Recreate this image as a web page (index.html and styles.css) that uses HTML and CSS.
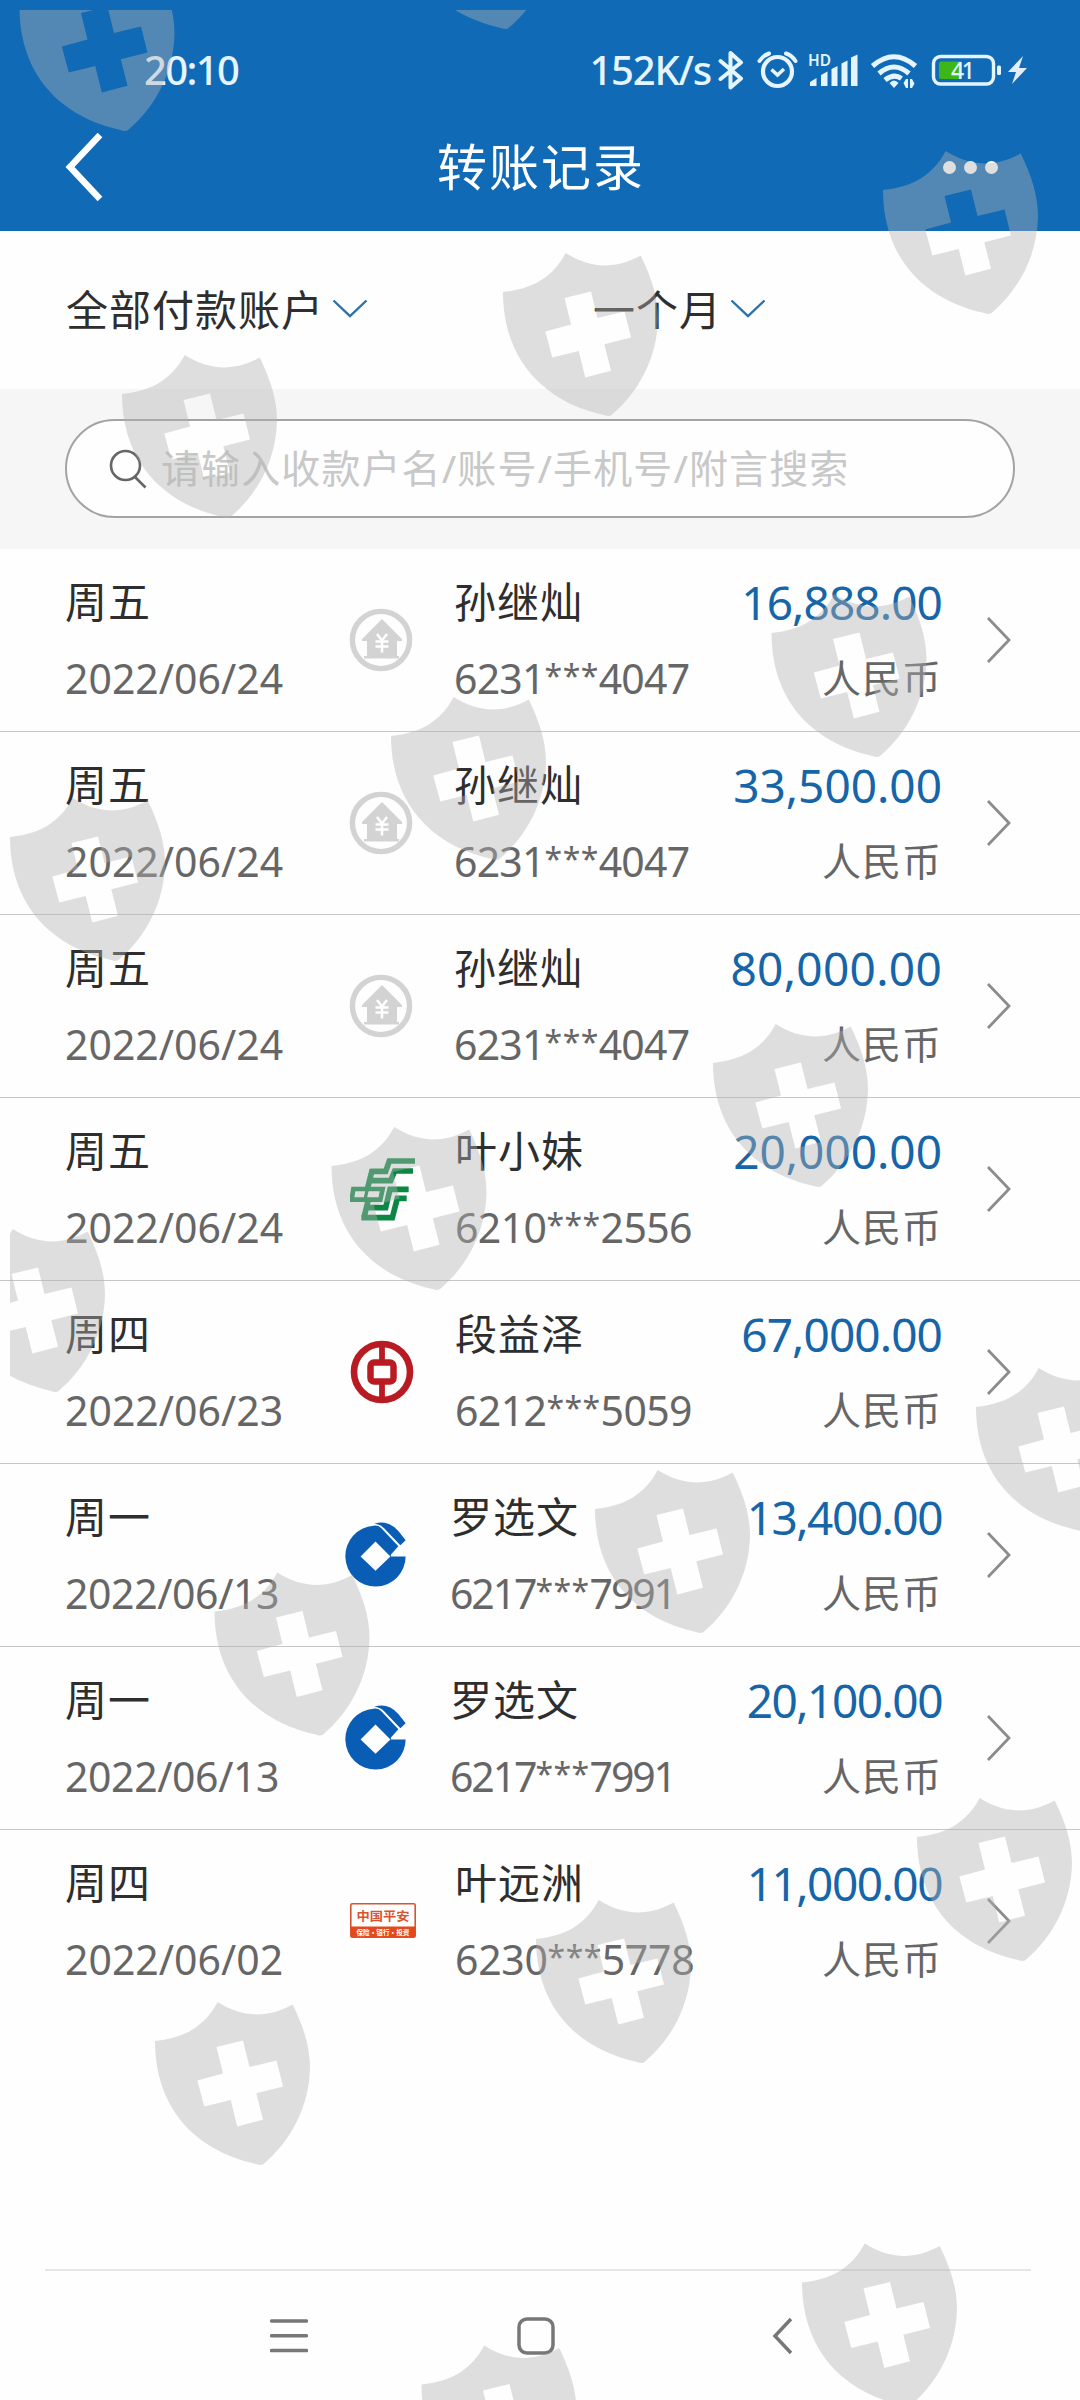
FILE: index.html
```html
<!DOCTYPE html>
<html lang="zh-CN">
<head>
    <meta charset="UTF-8">
    <meta name="viewport" content="width=device-width, initial-scale=1.0">
    <title>转账记录</title>
    <link rel="stylesheet" href="styles.css">
</head>
<body>

<!-- Shared icons -->
<svg class="defs" width="0" height="0">
    <symbol id="arrow-right" viewBox="0 0 26 48">
        <path d="M2 2L23 24L2 46" fill="none" stroke="#8c8c8c" stroke-width="2.8"/>
    </symbol>
    <symbol id="arrow-down" viewBox="0 0 36 20">
        <path d="M1.5 1.5L18 17L34.5 1.5" fill="none" stroke="#2b72a8" stroke-width="2.4"/>
    </symbol>
    <symbol id="bank-default" viewBox="0 0 64 64">
        <circle cx="32" cy="32" r="28.6" fill="none" stroke="#d3d3d3" stroke-width="5.4"/>
        <path d="M33 11L53 31V33H48V48H50V50.500H15V48H18V33H13V31Z" fill="#d3d3d3"/>
        <path d="M28 26L33 32.500L38 26M26.500 33.500H39.500M26.500 38.500H39.500M33 32V44.500" fill="none" stroke="#fff" stroke-width="2.500"/>
    </symbol>
    <symbol id="bank-ccb" viewBox="136 124 184 196">
        <path fill="#0a5db4" fill-rule="evenodd" d="M319 228A91 92 0 1 1 222 135Q236 133 245 142L297 197L274 223L275 228ZM228 183L183 228L228 271L273 228Z"/>
        <path fill="#0a5db4" d="M225 129Q265 116 297 151L319 179L303 194L254 143Q243 131 225 129Z"/>
    </symbol>
    <symbol id="shield" viewBox="0 -40 156 166" overflow="visible">
        <path fill-rule="evenodd" d="M0 0C30 -3 50 -15 62.700 -39C86 -24 112 -22 137.700 -36.400C149 -13 155 6 155 27C154 65 137 99 108 123.500Q105 124.500 101 123C38 109 0 65 0 0ZM88 -.5L61.500 6L68 32.500L42.300 39.500L49.300 65.500L75.700 59L82.300 85.400L108 78.700L101.300 52.300L128 45.500L121.500 19.500L94.500 26Z"/>
    </symbol>
</svg>

<div class="screen">
    <header class="header">
        <div class="status">
            <span class="time">20:10</span>
            <span class="speed">152K/s</span>
            <svg class="status-icons" width="310" height="42" viewBox="718 49 310 42" fill="none" stroke="#e4f5ff">
                <!-- bluetooth -->
                <path d="M720.500 61L741 78.500L730.500 87.500V53L741 62.500L720.500 79" stroke-width="4" stroke-linejoin="round" stroke-linecap="round"/>
                <!-- alarm -->
                <circle cx="777.500" cy="71.500" r="14.500" stroke-width="4.200"/>
                <path d="M759.500 61Q763 55.500 769 53.500M795.500 61Q792 55.500 786 53.500" stroke-width="4" stroke-linecap="round"/>
                <path d="M771.500 69.500L777.500 75L784 69" stroke-width="3.500"/>
                <!-- signal -->
                <path d="M810 86V82L816.500 78V86ZM821 86V75L827.500 71.500V86ZM831.500 86V69L837.500 66V86ZM841.500 86V63.500L847.500 60.500V86ZM851 86V57.500L857.500 54.500V86Z" fill="#e4f5ff" stroke="none"/>
                <!-- wifi -->
                <path d="M872.500 66Q894 47.500 915.500 66M879 73.500Q894 60.500 909 73.500M885 80Q894 73 901.500 78.500" stroke-width="5"/>
                <path d="M889.500 83Q894 78 898.500 83L894 88ZM903.500 83L906 79H908V88H906ZM910 88V79H912L914.500 83.500L912 88Z" fill="#e4f5ff" stroke="none"/>
                <!-- battery -->
                <rect x="933.500" y="56.500" width="60" height="27.500" rx="7" stroke-width="3.400"/>
                <rect x="939" y="61.500" width="23" height="17.500" rx="2" fill="#3fb618" stroke="none"/>
                <rect x="997" y="65.500" width="4" height="9.500" rx="1.500" fill="#e4f5ff" stroke="none"/>
                <path d="M1023 56L1008 72H1016L1012 84L1027 68H1019Z" fill="#e4eef8" stroke="none"/>
                <text class="hd" x="808" y="65.500" textLength="23" lengthAdjust="spacingAndGlyphs">HD</text>
                <text class="level" x="951" y="79" textLength="24">41</text>
            </svg>
        </div>
        <div class="title-bar">
            <svg class="back" width="38" height="70" viewBox="0 0 38 70">
                <path d="M35 3L5 35L35 67" fill="none" stroke="#fff" stroke-width="6.500"/>
            </svg>
            <h1>转账记录</h1>
            <div class="more"><i></i><i></i><i></i></div>
        </div>
    </header>

    <div class="filters">
        <div class="filter"><span>全部付款账户</span><svg width="36" height="20"><use href="#arrow-down"/></svg></div>
        <div class="filter"><span>一个月</span><svg width="36" height="20"><use href="#arrow-down"/></svg></div>
    </div>

    <div class="search">
        <div class="search-box">
            <svg width="38" height="40" viewBox="0 0 38 40" fill="none" stroke="#666" stroke-width="2.600">
                <circle cx="16.500" cy="16.500" r="14.500"/>
                <path d="M26 28L36.500 38.500"/>
            </svg>
            <span>请输入收款户名/账号/手机号/附言搜索</span>
        </div>
    </div>

    <ul class="records">
        <li class="record">
            <div class="date"><p>周五</p><p class="sub">2022/06/24</p></div>
            <div class="bank"><svg width="64" height="64"><use href="#bank-default"/></svg></div>
            <div class="payee"><p>孙继灿</p><p class="sub">6231<span class="mask">***</span>4047</p></div>
            <div class="amount"><p class="money narrow">16,888.00</p><p class="sub cny">人民币</p></div>
            <svg class="go" width="26" height="48"><use href="#arrow-right"/></svg>
        </li>
        <li class="record">
            <div class="date"><p>周五</p><p class="sub">2022/06/24</p></div>
            <div class="bank"><svg width="64" height="64"><use href="#bank-default"/></svg></div>
            <div class="payee"><p>孙继灿</p><p class="sub">6231<span class="mask">***</span>4047</p></div>
            <div class="amount"><p class="money">33,500.00</p><p class="sub cny">人民币</p></div>
            <svg class="go" width="26" height="48"><use href="#arrow-right"/></svg>
        </li>
        <li class="record">
            <div class="date"><p>周五</p><p class="sub">2022/06/24</p></div>
            <div class="bank"><svg width="64" height="64"><use href="#bank-default"/></svg></div>
            <div class="payee"><p>孙继灿</p><p class="sub">6231<span class="mask">***</span>4047</p></div>
            <div class="amount"><p class="money wide">80,000.00</p><p class="sub cny">人民币</p></div>
            <svg class="go" width="26" height="48"><use href="#arrow-right"/></svg>
        </li>
        <li class="record psbc">
            <div class="date"><p>周五</p><p class="sub">2022/06/24</p></div>
            <div class="bank">
                <svg width="66" height="64" viewBox="148 168 198 192" fill="none" stroke="#0c8743" stroke-width="17">
                    <path d="M343 180H266L255 211H210M337 210H282L270 239H203M215 205L200 264"/>
                    <path d="M158 264H246L239 296H153Z" stroke-width="14"/>
                    <path d="M200 264L193 296" stroke-width="10"/>
                    <path d="M324 265H268L255 320H196M318 292H290L275 350H182M203 296L190 350"/>
                </svg>
            </div>
            <div class="payee"><p>叶小妹</p><p class="sub">6210<span class="mask">***</span>2556</p></div>
            <div class="amount"><p class="money">20,000.00</p><p class="sub cny">人民币</p></div>
            <svg class="go" width="26" height="48"><use href="#arrow-right"/></svg>
        </li>
        <li class="record boc">
            <div class="date"><p>周四</p><p class="sub">2022/06/23</p></div>
            <div class="bank">
                <svg width="64" height="64" viewBox="0 0 64 64" fill="none" stroke="#b81c22">
                    <circle cx="32" cy="32" r="28" stroke-width="6.600"/>
                    <rect x="20.500" y="22.500" width="23" height="19" rx="3.500" stroke-width="6.500"/>
                    <path d="M32 3V20M32 44V61" stroke-width="5.800"/>
                </svg>
            </div>
            <div class="payee"><p>段益泽</p><p class="sub">6212<span class="mask">***</span>5059</p></div>
            <div class="amount"><p class="money narrow">67,000.00</p><p class="sub cny">人民币</p></div>
            <svg class="go" width="26" height="48"><use href="#arrow-right"/></svg>
        </li>
        <li class="record ccb">
            <div class="date"><p>周一</p><p class="sub">2022/06/13</p></div>
            <div class="bank"><svg width="61" height="65"><use href="#bank-ccb"/></svg></div>
            <div class="payee"><p>罗选文</p><p class="sub">6217<span class="mask">***</span>7991</p></div>
            <div class="amount"><p class="money narrower">13,400.00</p><p class="sub cny">人民币</p></div>
            <svg class="go" width="26" height="48"><use href="#arrow-right"/></svg>
        </li>
        <li class="record ccb">
            <div class="date"><p>周一</p><p class="sub">2022/06/13</p></div>
            <div class="bank"><svg width="61" height="65"><use href="#bank-ccb"/></svg></div>
            <div class="payee"><p>罗选文</p><p class="sub">6217<span class="mask">***</span>7991</p></div>
            <div class="amount"><p class="money narrower">20,100.00</p><p class="sub cny">人民币</p></div>
            <svg class="go" width="26" height="48"><use href="#arrow-right"/></svg>
        </li>
        <li class="record pingan">
            <div class="date"><p>周四</p><p class="sub">2022/06/02</p></div>
            <div class="bank">
                <svg width="66" height="35" viewBox="0 0 66 35">
                    <rect x=".8" y=".8" width="64.400" height="33.400" rx="1.500" fill="#fff" stroke="#d9532f" stroke-width="1.600"/>
                    <path d="M1 23.500H65V34H1Z" fill="#e4481b"/>
                    <text class="pa-name" x="33" y="18" textLength="53" lengthAdjust="spacingAndGlyphs">中国平安</text>
                    <text class="pa-sub" x="33" y="31.800" textLength="53" lengthAdjust="spacingAndGlyphs">保险·银行·投资</text>
                </svg>
            </div>
            <div class="payee"><p>叶远洲</p><p class="sub">6230<span class="mask">***</span>5778</p></div>
            <div class="amount"><p class="money narrower">11,000.00</p><p class="sub cny">人民币</p></div>
            <svg class="go" width="26" height="48"><use href="#arrow-right"/></svg>
        </li>
    </ul>

    <nav class="nav">
        <svg width="38" height="38" viewBox="0 0 38 38"><path d="M1.500 4H36.500M1.500 18.800H36.500M1.500 33.600H36.500" stroke-linecap="round"/></svg>
        <svg width="38" height="38" viewBox="0 0 38 38"><rect x="2" y="2" width="34" height="34" rx="8"/></svg>
        <svg class="nav-back" width="22" height="38" viewBox="0 0 22 38"><path d="M19 2L3 19L19 36"/></svg>
    </nav>

    <!-- Watermark -->
    <svg class="watermark" width="1080" height="2400" viewBox="0 0 1080 2400">
        <clipPath id="area"><rect x="10" y="10" width="1070" height="2390"/></clipPath>
        <g clip-path="url(#area)">
            <use href="#shield" x="19.500" y="-33" width="156" height="166"/>
            <use href="#shield" x="400" y="-135" width="156" height="166"/>
            <use href="#shield" x="883" y="150" width="156" height="166"/>
            <use href="#shield" x="503" y="252" width="156" height="166"/>
            <use href="#shield" x="122" y="354" width="156" height="166"/>
            <use href="#shield" x="771.500" y="593" width="156" height="166"/>
            <use href="#shield" x="391" y="696" width="156" height="166"/>
            <use href="#shield" x="10" y="797" width="156" height="166"/>
            <use href="#shield" x="713" y="1023" width="156" height="166"/>
            <use href="#shield" x="331.500" y="1126" width="156" height="166"/>
            <use href="#shield" x="-50" y="1228" width="156" height="166"/>
            <use href="#shield" x="976" y="1367" width="156" height="166"/>
            <use href="#shield" x="595" y="1469" width="156" height="166"/>
            <use href="#shield" x="214.500" y="1571.500" width="156" height="166"/>
            <use href="#shield" x="917" y="1797" width="156" height="166"/>
            <use href="#shield" x="536" y="1899" width="156" height="166"/>
            <use href="#shield" x="155" y="2001" width="156" height="166"/>
            <use href="#shield" x="802" y="2242.500" width="156" height="166"/>
            <use href="#shield" x="421.500" y="2344.500" width="156" height="166"/>
        </g>
    </svg>
</div>

</body>
</html>
```
FILE: styles.css
```css
* {
    margin: 0;
    padding: 0;
    box-sizing: border-box;
}
body {
    font-family: "Noto Sans", "Noto Sans CJK SC", sans-serif;
    background-color: #fefefe;
    color: #2e2e2e;
}
svg {
    display: block;
    flex-shrink: 0;
}
.defs {
    position: absolute;
}
.screen {
    position: relative;
    width: 1080px;
    height: 2400px;
    overflow: hidden;
    display: flex;
    flex-direction: column;
}
.header {
    height: 231px;
    padding-top: 22px;
    background-color: #116ab6;
    color: #fff;
}
.status {
    height: 96px;
    padding: 0 52px 0 144px;
    display: flex;
    align-items: center;
    color: #e4f5ff;
    font-size: 40px;
    font-weight: 500;
}
.time, .speed {
    padding-bottom: 2px;
    letter-spacing: -1.6px;
}
.speed {
    margin-left: auto;
    margin-right: 7px;
    letter-spacing: -1.2px;
}
.status text {
    fill: #e4f5ff;
    stroke: none;
    font-weight: 500;
}
.status .hd {
    font-size: 16px;
    font-weight: 600;
}
.status .level {
    font-size: 23px;
}
.title-bar {
    height: 98px;
    padding: 0 82px 0 65px;
    display: flex;
    align-items: center;
    justify-content: space-between;
}
.title-bar h1 {
    font-size: 50px;
    font-weight: 400;
    letter-spacing: 2px;
    padding: 0 0 6px 36px;
}
.more {
    display: flex;
    gap: 8px;
}
.more i {
    width: 13px;
    height: 13px;
    border-radius: 50%;
    background-color: #fff;
}
.filters {
    height: 158px;
    padding-left: 66px;
    display: grid;
    grid-template-columns: 527px 1fr;
    align-items: center;
    font-size: 42px;
    letter-spacing: 1px;
}
.filter {
    display: flex;
    align-items: center;
    gap: 8px;
}
.filter span {
    padding-bottom: 5px;
}
.filter svg {
    margin-top: -2px;
}
.search {
    height: 160px;
    padding: 30px 65px;
    background-color: #f6f6f6;
}
.search-box {
    height: 99px;
    padding-left: 42px;
    border: 2px solid #a3a3a3;
    border-radius: 50px;
    background-color: #fefefe;
    display: flex;
    align-items: center;
    gap: 14px;
    color: #c8c8c8;
    font-size: 39px;
    letter-spacing: 1.1px;
}
.search-box span {
    padding-bottom: 6px;
}
.records {
    list-style: none;
    flex: 1;
}
.record {
    height: 183px;
    padding: 15px 68px 0 65px;
    border-bottom: 1px solid #c6c6c6;
    display: flex;
    font-size: 42px;
    line-height: 76px;
}
.record:last-child {
    border-bottom: none;
}
.record .sub {
    font-size: 41px;
    color: #666;
}
.record .cny {
    font-size: 39px;
    letter-spacing: 1px;
}
.date {
    width: 284px;
    letter-spacing: 1px;
}
.date .sub {
    letter-spacing: 0;
}
.bank {
    width: 105px;
    height: 151px;
    display: flex;
    align-items: center;
}
.payee {
    letter-spacing: 1px;
}
.payee .sub {
    letter-spacing: -0.8px;
}
.payee .mask {
    font-size: 32px;
    line-height: 1;
    letter-spacing: 0.4px;
    vertical-align: 6px;
}
.psbc .date, .boc .date, .pingan .date {
    width: 285px;
}
.psbc .payee .sub, .boc .payee .sub {
    letter-spacing: -0.6px;
}
.pingan .payee .sub {
    letter-spacing: -0.3px;
}
.ccb .date {
    width: 280px;
}
.ccb .date .sub {
    letter-spacing: -0.4px;
}
.ccb .payee .sub {
    letter-spacing: -2.1px;
}
.record .payee .sub .mask {
    letter-spacing: 0.4px;
}
.amount {
    margin-left: auto;
    text-align: right;
}
.money {
    font-size: 46px;
    color: #1565a8;
}
.wide {
    letter-spacing: 0.3px;
}
.narrow {
    letter-spacing: -0.9px;
}
.narrower {
    letter-spacing: -1.5px;
}
.go {
    margin: 52px 0 0 44px;
}
.nav {
    height: 131px;
    margin: 0 49px 0 45px;
    padding-left: 225px;
    border-top: 2px solid #e6e6e6;
    display: flex;
    align-items: center;
    gap: 209px;
}
.nav svg {
    fill: none;
    stroke: #777;
    stroke-width: 3.500;
}
.nav .nav-back {
    margin-left: 8px;
}
.watermark {
    position: absolute;
    top: 0;
    left: 0;
    fill: rgba(178, 178, 178, 0.416);
    pointer-events: none;
}
.pa-name, .pa-sub {
    font-family: "Noto Sans CJK SC", sans-serif;
    font-weight: 700;
    text-anchor: middle;
}
.pa-name {
    font-size: 12px;
    fill: #d9532f;
}
.pa-sub {
    font-size: 7px;
    fill: #fff;
}
```
